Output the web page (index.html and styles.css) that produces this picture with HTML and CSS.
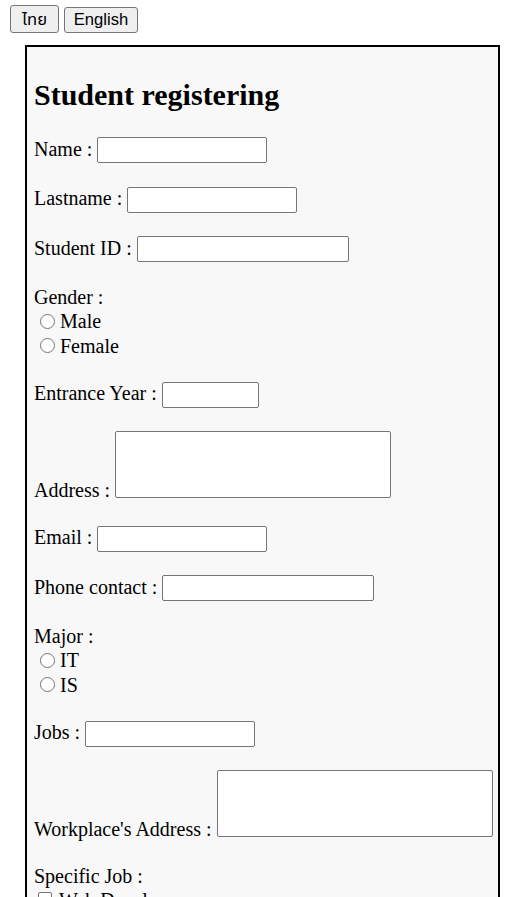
FILE: index.html
```html
<!DOCTYPE html>
<html lang="th">
<head>
<meta charset="utf-8">
<title>Student registering</title>
<link rel="stylesheet" href="styles.css">
</head>
<body>
<div class="lang">
  <button class="btn btn-th" type="button">ไทย</button>
  <button class="btn btn-en" type="button">English</button>
</div>
<form class="card">
  <h2 class="title">Student registering</h2>

  <div class="row"><label class="lbl">Name :</label><input class="field w170" type="text"></div>
  <div class="row"><label class="lbl">Lastname :</label><input class="field w170" type="text"></div>
  <div class="row"><label class="lbl">Student ID :</label><input class="field w212" type="text"></div>

  <div class="group">
    <div class="group-label">Gender :</div>
    <label class="opt"><input class="radio" type="radio" name="gender">Male</label>
    <label class="opt"><input class="radio" type="radio" name="gender">Female</label>
  </div>

  <div class="row"><label class="lbl">Entrance Year :</label><input class="field w97" type="text"></div>
  <div class="row tall"><label class="lbl">Address :</label><textarea class="area"></textarea></div>
  <div class="row"><label class="lbl">Email :</label><input class="field w170" type="text"></div>
  <div class="row"><label class="lbl">Phone contact :</label><input class="field w212" type="text"></div>

  <div class="group">
    <div class="group-label">Major :</div>
    <label class="opt"><input class="radio" type="radio" name="major">IT</label>
    <label class="opt"><input class="radio" type="radio" name="major">IS</label>
  </div>

  <div class="row"><label class="lbl">Jobs :</label><input class="field w170" type="text"></div>
  <div class="row tall"><label class="lbl">Workplace's Address :</label><textarea class="area"></textarea></div>

  <div class="group">
    <div class="group-label">Specific Job :</div>
    <label class="opt"><input class="check" type="checkbox">Web Developer</label>
    <label class="opt"><input class="check" type="checkbox">Mobile Developer</label>
    <label class="opt"><input class="check" type="checkbox">System Analyst</label>
  </div>
</form>
</body>
</html>
```

FILE: styles.css
```css
html, body {
  margin: 0;
  padding: 0;
  background: #ffffff;
}

body {
  font-family: "Liberation Serif", "Times New Roman", serif;
  font-size: 20px;
  color: #000000;
}

.lang {
  display: flex;
  align-items: flex-end;
  gap: 5px;
  padding: 5px 0 0 10px;
}

.btn {
  box-sizing: border-box;
  margin: 0;
  padding: 0;
  border: 1px solid #767676;
  border-radius: 3px;
  background: #efefef;
  color: #000000;
  font-family: "Liberation Sans", Arial, "Noto Sans Thai", "Noto Sans", sans-serif;
  font-size: 16.6px;
  text-align: center;
}

.btn-th {
  width: 49px;
  height: 28px;
}

.btn-en {
  width: 74px;
  height: 26px;
}

.card {
  box-sizing: border-box;
  width: 475px;
  margin: 12px 0 0 25px;
  padding: 6px 8px 0 7px;
  border: 2px solid #000000;
  border-bottom: none;
  background: #f8f8f8;
}

.title {
  margin: 25px 0 24.5px;
  font-size: 30px;
  font-weight: bold;
  line-height: 34.5px;
}

.row {
  display: flex;
  align-items: flex-end;
  gap: 5px;
  margin-bottom: 19.5px;
  padding-bottom: 4px;
}

.row.tall {
  padding-bottom: 8px;
}

.lbl {
  line-height: 23px;
  white-space: nowrap;
  margin-bottom: 2.5px;
  flex: none;
}

.row.tall .lbl {
  margin-bottom: -3.5px;
}

.field,
.area {
  box-sizing: border-box;
  flex: none;
  margin: 0;
  padding: 1px 2px;
  border: 1px solid #767676;
  border-radius: 2px;
  background: #ffffff;
  font-family: "Liberation Sans", Arial, sans-serif;
  font-size: 16.6px;
}

.field {
  height: 26px;
}

.w170 { width: 170px; }
.w212 { width: 212px; }
.w97 { width: 97px; }

.area {
  width: 276px;
  height: 67px;
  resize: none;
  display: block;
}

.group {
  margin-bottom: 19.5px;
  padding-bottom: 4.5px;
}

.group-label {
  line-height: 23px;
}

.opt {
  display: flex;
  align-items: flex-end;
  height: 24.5px;
  line-height: 23px;
}

.radio {
  appearance: none;
  -webkit-appearance: none;
  box-sizing: border-box;
  width: 15px;
  height: 15px;
  margin: 0 5px 4.5px 6px;
  border: 1px solid #767676;
  border-radius: 50%;
  background: #ffffff;
  flex: none;
}

.check {
  appearance: none;
  -webkit-appearance: none;
  box-sizing: border-box;
  width: 14px;
  height: 14px;
  margin: 0 7px 6.5px 4px;
  border: 1px solid #767676;
  border-radius: 2px;
  background: #ffffff;
  flex: none;
}
```
